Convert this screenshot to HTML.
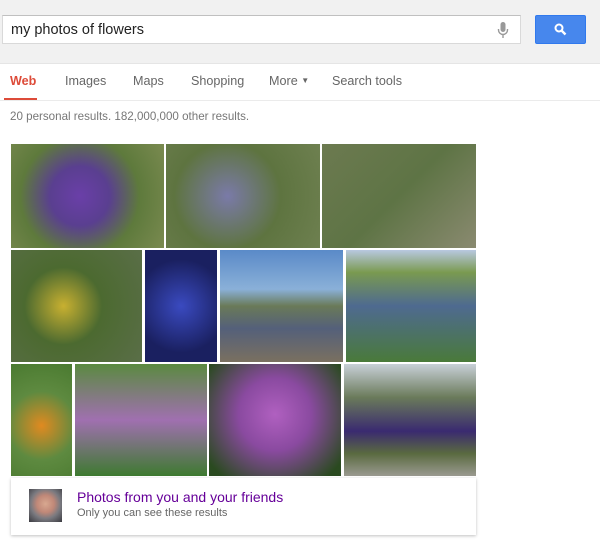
<!DOCTYPE html><html><head><style>
body{margin:0;width:600px;height:549px;background:#fff;font-family:"Liberation Sans",Arial,sans-serif;position:relative;overflow:hidden}
.top{position:absolute;left:0;top:0;width:600px;height:63px;background:#f1f1f1;border-bottom:1px solid #e5e5e5}
.sb{position:absolute;left:2px;top:15px;width:517px;height:27px;background:#fff;border:1px solid #d9d9d9;border-top-color:#c0c0c0}
.sb span{position:absolute;left:8px;top:6px;font-size:14.5px;color:#222}
.btn{position:absolute;left:535px;top:15px;width:49px;height:27px;background:#4787ed;border:1px solid #3079ed;border-radius:2px}
.nav{position:absolute;top:74px;font-size:12.6px;color:#666}
.line{position:absolute;left:0;top:100px;width:600px;height:1px;background:#ebebeb}
.t{position:absolute}
</style></head><body>
<div class="top"></div>
<div class="sb"><span>my photos of flowers</span>
<svg style="position:absolute;left:494px;top:6px" width="12" height="17" viewBox="0 0 12 17"><rect x="3.5" y="0" width="5" height="10" rx="2.5" fill="#999"/><path d="M1.5 7v1a4.5 4.5 0 0 0 9 0V7M6 12.5V16" stroke="#999" stroke-width="1.4" fill="none"/></svg></div>
<div class="btn"><svg style="position:absolute;left:18px;top:7px" width="13" height="13" viewBox="0 0 13 13"><circle cx="5" cy="5" r="3.5" stroke="#fff" stroke-width="2" fill="none"/><path d="M7.5 7.5L11.5 11.5" stroke="#fff" stroke-width="2.4"/></svg></div>
<div class="nav" style="left:10px;color:#dd4b39;font-weight:bold">Web</div>
<div style="position:absolute;left:4px;top:98px;width:33px;height:3px;background:#dd4b39"></div>
<div class="nav" style="left:65px">Images</div>
<div class="nav" style="left:133px">Maps</div>
<div class="nav" style="left:191px">Shopping</div>
<div class="nav" style="left:269px">More <span style="font-size:8px;vertical-align:2px">▼</span></div>
<div class="nav" style="left:332px">Search tools</div>
<div class="line"></div>
<div style="position:absolute;left:10px;top:110px;font-size:11.6px;color:#777">20 personal results. 182,000,000 other results.</div>

<div class="t" style="left:11px;top:144px;width:153px;height:104px;background:radial-gradient(circle at 45% 50%,#6a3fa8 0,#5a3f90 30%,#5e7a3c 60%,#7a8a50 100%)"></div>
<div class="t" style="left:166px;top:144px;width:154px;height:104px;background:radial-gradient(circle at 40% 50%,#7a7aa8,#5e7440 50%,#6e8050)"></div>
<div class="t" style="left:322px;top:144px;width:154px;height:104px;background:linear-gradient(135deg,#6c7a50,#5e7445 50%,#8a8a70)"></div>
<div class="t" style="left:11px;top:250px;width:131px;height:112px;background:radial-gradient(circle at 40% 50%,#c8b030,#4c6a30 40%,#5a6e48)"></div>
<div class="t" style="left:145px;top:250px;width:72px;height:112px;background:radial-gradient(circle,#3a4ac0,#1a2060 70%)"></div>
<div class="t" style="left:220px;top:250px;width:123px;height:112px;background:linear-gradient(180deg,#5a8ac8 0,#8ab0d8 35%,#6a7a58 50%,#54607a 70%,#7a7060 100%)"></div>
<div class="t" style="left:346px;top:250px;width:130px;height:112px;background:linear-gradient(180deg,#b8c8e0 0,#7a9a50 20%,#4e6a90 50%,#4a7a3a 100%)"></div>
<div class="t" style="left:11px;top:364px;width:61px;height:112px;background:radial-gradient(circle at 50% 55%,#e08a20,#5e8a40 50%,#4a7a30)"></div>
<div class="t" style="left:75px;top:364px;width:132px;height:112px;background:linear-gradient(180deg,#5a8a40,#a070b0 50%,#3e7a30)"></div>
<div class="t" style="left:209px;top:364px;width:132px;height:112px;background:radial-gradient(circle at 50% 45%,#b060c0,#8a4aa0 40%,#2a4a20 90%)"></div>
<div class="t" style="left:344px;top:364px;width:132px;height:112px;background:linear-gradient(180deg,#c8d0d8 0,#6a7a5a 30%,#3a2a70 60%,#5a6a40 80%,#9a9a90 100%)"></div>

<div style="position:absolute;left:11px;top:478px;width:465px;height:57px;background:#fff;box-shadow:0 1px 3px rgba(0,0,0,.25)"></div>
<div style="position:absolute;left:29px;top:489px;width:33px;height:33px;background:radial-gradient(circle at 50% 45%,#d8a890 0,#c08878 35%,#7a7a80 60%,#3a3a40 100%)"></div>
<div style="position:absolute;left:77px;top:489px;font-size:14px;color:#609">Photos from you and your friends</div>
<div style="position:absolute;left:77px;top:507px;font-size:11px;color:#666">Only you can see these results</div>
</body></html>
